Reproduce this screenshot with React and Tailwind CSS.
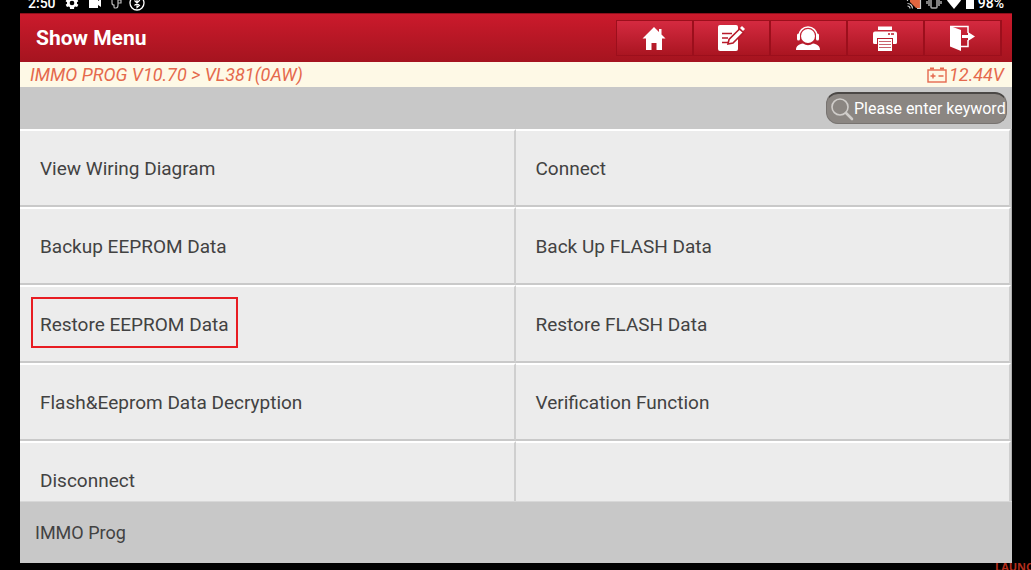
import React, { useState } from 'react'
import clsx from 'clsx'

const MENU_ITEMS = [
  'View Wiring Diagram',
  'Connect',
  'Backup EEPROM Data',
  'Back Up FLASH Data',
  'Restore EEPROM Data',
  'Restore FLASH Data',
  'Flash&Eeprom Data Decryption',
  'Verification Function',
  'Disconnect',
]

const TOOLBAR = [
  { label: 'Home', Icon: HomeIcon },
  { label: 'Feedback', Icon: NoteIcon },
  { label: 'Support', Icon: SupportIcon },
  { label: 'Print', Icon: PrintIcon },
  { label: 'Exit', Icon: ExitIcon },
]

export default function App() {
  const [selected, setSelected] = useState('Restore EEPROM Data')
  const [keyword, setKeyword] = useState('')

  return (
    <div className="h-screen flex flex-col bg-black font-['Roboto',sans-serif]">
      <StatusBar />

      <div className="flex-1 min-h-0 flex flex-col ml-5 mr-[19px] bg-[#c8c8c8]">
        {/* Title bar */}
        <header className="h-[49px] shrink-0 flex items-center justify-between pl-4 pr-[10px] border-t border-[#8c101c] bg-linear-to-b from-[#cb1a2c] to-[#a5141f]">
          <h1 className="text-[21px] leading-7 font-bold text-white">Show Menu</h1>
          <nav className="flex border-l border-[#9c0f1c]">
            {TOOLBAR.map(({ label, Icon }) => (
              <button
                key={label}
                aria-label={label}
                className="w-[77px] h-9 flex items-center justify-center pr-[2px] text-white border-y border-r-2 border-[#9c0f1c] bg-linear-to-b from-[#d52a40] to-[#aa1521]"
              >
                <Icon />
              </button>
            ))}
          </nav>
        </header>

        {/* Breadcrumb and battery voltage */}
        <div className="h-[25px] shrink-0 flex items-center justify-between pl-[10px] pr-2 bg-[#fef9e6] text-[#e5694d] text-lg leading-6 italic">
          <span>IMMO PROG V10.70 &gt; VL381(0AW)</span>
          <span className="flex items-center gap-[2px]">
            <BatteryIcon />
            12.44V
          </span>
        </div>

        {/* Search */}
        <div className="h-[42px] shrink-0 flex items-center justify-end pr-[5px]">
          <label className="w-[181px] h-8 flex items-center pl-[3px] rounded-xl bg-[#8b8682] border border-[#777370] border-t-2 border-t-[#4b4846]">
            <svg className="w-6 h-6 shrink-0" viewBox="0 0 24 24" fill="none" stroke="#d0cdca">
              <circle cx="10" cy="10" r="8" strokeWidth="1.6" />
              <path d="M16 16l6 6" strokeWidth="2.6" strokeLinecap="round" />
            </svg>
            <input
              type="text"
              aria-label="Search menu"
              value={keyword}
              onChange={(e) => setKeyword(e.target.value)}
              placeholder="Please enter keyword"
              className="flex-1 min-w-0 bg-transparent text-base text-white placeholder:text-white outline-none"
            />
          </label>
        </div>

        {/* Menu list */}
        <main className="flex-1 min-h-0 overflow-hidden grid grid-cols-2 auto-rows-[78px] content-start border-r border-[#b0b0b0] bg-[#ececec]">
          {MENU_ITEMS.map((item) => (
            <button
              key={item}
              onClick={() => setSelected(item)}
              className="flex items-center pb-1 pl-[11px] text-left text-[19px] leading-7 text-[#424242] border-t-2 border-t-white border-b-2 border-b-[#c9c9c9] border-r-2 border-r-[#cfcfcf]"
            >
              <span
                className={clsx(
                  'px-[7px] pt-3 pb-[7px] border-2',
                  item === selected ? 'border-[#e81c22]' : 'border-transparent'
                )}
              >
                {item}
              </span>
            </button>
          ))}
          <div className="border-t-2 border-t-white border-b-2 border-b-[#c9c9c9] border-r-2 border-r-[#cfcfcf]" />
        </main>

        <footer className="h-[62px] shrink-0 flex items-center pl-[15px] text-lg text-[#424242] border-t border-[#d8d8d8]">
          IMMO Prog
        </footer>
      </div>

      {/* Brand strip */}
      <div className="h-[7px] shrink-0 flex justify-end overflow-hidden">
        <span className="w-9 overflow-hidden text-[11px] leading-[8px] font-bold text-[#b32d1c] font-['Open_Sans',sans-serif]">
          LAUNCH
        </span>
      </div>
    </div>
  )
}

function StatusBar() {
  return (
    <div className="h-[13px] shrink-0 overflow-hidden flex items-end justify-between pl-7 pr-[27px] text-sm leading-5 font-medium text-white">
      <div className="h-5 flex items-center">
        <span className="w-9">2:50</span>
        <div className="flex items-center gap-[7px]">
          <svg className="w-4 h-4" viewBox="0 0 24 24" fill="currentColor">
            <path d="M19.4 13a7.8 7.8 0 000-2l2.1-1.6-2-3.5-2.5 1a7.3 7.3 0 00-1.7-1L15 3H9l-.4 2.9a7.3 7.3 0 00-1.7 1l-2.5-1-2 3.5L4.600 11a7.8 7.8 0 000 2l-2.100 1.600 2 3.500 2.500-1a7.3 7.3 0 001.700 1L9 21h6l.4-2.900a7.3 7.3 0 001.700-1l2.500 1 2-3.500zM12 15.500a3.500 3.500 0 110-7 3.500 3.500 0 010 7z" />
          </svg>
          <svg className="w-4 h-4" viewBox="0 0 16 16" fill="currentColor">
            <path d="M2 3h9v3l3-2v8l-3-2v3H2z" />
          </svg>
          <svg className="w-3 h-4" viewBox="0 0 12 16" fill="none" stroke="#bbbbbb" strokeWidth="1.2">
            <path d="M2 4v4q0 2 2 2v2q0 1 1 1h1q2 0 2-3V8h3V5H8v3" />
          </svg>
          <svg className="w-4 h-4" viewBox="0 0 16 16" fill="none" stroke="currentColor">
            <circle cx="8" cy="8" r="7" strokeWidth="1.3" />
            <path d="M5.5 5.500l5 5L8 12.500v-9l2.500 2-5 5" strokeWidth="1.1" />
          </svg>
        </div>
      </div>
      <div className="h-5 flex items-center gap-1">
        <svg className="w-4 h-4" viewBox="0 0 16 16" fill="none">
          <path d="M4 3h10v10h-4L4 7z" fill="#e0653f" />
          <path d="M1.5 6V3.500h13v10H11M1.500 8.500a5 5 0 015 5M1.500 11a2.500 2.500 0 012.500 2.500" stroke="#cccccc" strokeWidth="1.2" />
        </svg>
        <svg className="w-4 h-4" viewBox="0 0 16 16" fill="none" stroke="#aaaaaa" strokeWidth="1.5">
          <rect x="5" y="2" width="6" height="11" rx="1" />
          <path d="M3 4v7M13 4v7M1 6v3M15 6v3" />
        </svg>
        <svg className="w-4 h-4" viewBox="0 0 16 16" fill="currentColor">
          <path d="M1 5.500a10 10 0 0114 0L8 14z" />
        </svg>
        <svg className="w-2 h-4" viewBox="0 0 8 16" fill="currentColor">
          <path d="M0 2h2V1h4v1h2v12H0z" />
        </svg>
        <span>98%</span>
      </div>
    </div>
  )
}

function HomeIcon() {
  return (
    <svg className="w-7 h-7" viewBox="0 0 28 28" fill="currentColor">
      <path d="M14 3L2.500 14.500H6V26h5.500v-7h5v7H22V14.500h3.500L21.500 10.500V5H19v3z" />
    </svg>
  )
}

function NoteIcon() {
  return (
    <svg className="w-7 h-7" viewBox="0 0 28 28" fill="currentColor">
      <path d="M3 1h16q2 0 2 2v22q0 2-2 2H3q-2 0-2-2V3q0-2 2-2z" />
      <path d="M5 9.500h10M5 14h6M5 18.500h9" stroke="#b81a2a" strokeWidth="1.5" />
      <path d="M11 20l1-4.500L22.500 5l4 3.500L16 19z" stroke="#b81a2a" strokeWidth="1.6" />
      <path d="M23 4l2-2 3 3-2 2z" />
    </svg>
  )
}

function SupportIcon() {
  return (
    <svg className="w-7 h-7" viewBox="0 0 28 28" fill="currentColor">
      <circle cx="14" cy="12" r="7" />
      <path d="M5 12a9 9 0 0118 0" fill="none" stroke="currentColor" strokeWidth="1.5" />
      <rect x="3" y="9.500" width="3" height="7" rx="1.5" />
      <rect x="22" y="9.500" width="3" height="7" rx="1.5" />
      <path d="M2 26c0-4 3-6 7-6.500q5 3.500 10 0c4 .5 7 2.500 7 6.500z" />
    </svg>
  )
}

function PrintIcon() {
  return (
    <svg className="w-7 h-7" viewBox="0 0 28 28" fill="currentColor">
      <path d="M7 2.500h14V6H7z" />
      <path d="M4 7.500h20q2 0 2 2v9q0 1.500-1.500 1.500H22v-5H6v5H3.500Q2 20 2 18.500v-9q0-2 2-2z" />
      <path d="M17 10h2M20 10h3" stroke="#b81a2a" strokeWidth="1.5" />
      <path d="M7 14.500h14V27H7z" />
      <path d="M8 17.500h12M8 20.500h12M8 23.500h12" stroke="#c9626d" strokeWidth="1.2" />
      <path d="M6 14.500h16" stroke="#b81a2a" strokeWidth="1" />
    </svg>
  )
}

function ExitIcon() {
  return (
    <svg className="w-7 h-7" viewBox="0 0 28 28" fill="currentColor">
      <path d="M2 2l11 4v21L2 22.500z" />
      <path d="M2 2.500h18V9M20 16v6.500h-7" fill="none" stroke="currentColor" strokeWidth="1.5" />
      <path d="M14 11h6V8l7 4.500-7 4.500v-3h-6z" />
    </svg>
  )
}

function BatteryIcon() {
  return (
    <svg className="w-5 h-4" viewBox="0 0 20 16" fill="none" stroke="currentColor" strokeWidth="1.4">
      <rect x="1" y="3" width="18" height="12" />
      <path d="M3 1.500h4M13 1.500h4" strokeWidth="2" />
      <path d="M3.500 9h5M6 6.500v5M11.500 9h5" />
    </svg>
  )
}
